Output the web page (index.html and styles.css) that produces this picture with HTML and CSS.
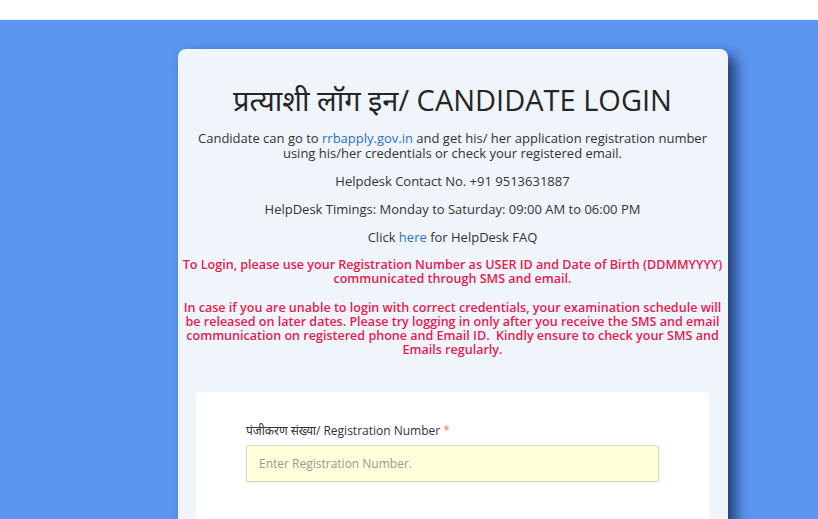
FILE: index.html
```html
<!DOCTYPE html>
<html>
<head>
<meta charset="utf-8">
<link rel="stylesheet" href="styles.css">
</head>
<body>
<div class="topbar"></div>
<main class="stage">
  <section class="card">
    <h1 class="title">प्रत्याशी लॉग इन/ CANDIDATE LOGIN</h1>
    <p class="info">Candidate can go to <a href="#">rrbapply.gov.in</a> and get his/ her application registration number using his/her credentials or check your registered email.</p>
    <p class="info">Helpdesk Contact No. +91 9513631887</p>
    <p class="info">HelpDesk Timings: Monday to Saturday: 09:00 AM to 06:00 PM</p>
    <p class="info">Click <a href="#">here</a> for HelpDesk FAQ</p>
    <p class="warn">To Login, please use your Registration Number as USER ID and Date of Birth (DDMMYYYY) communicated through SMS and email.</p>
    <p class="warn">In case if you are unable to login with correct credentials, your examination schedule will be released on later dates. Please try logging in only after you receive the SMS and email communication on registered phone and Email ID.&nbsp; Kindly ensure to check your SMS and Emails regularly.</p>
    <div class="form-box">
      <label class="field-label">पंजीकरण संख्या/ Registration Number <span class="req">*</span></label>
      <input class="field-input" type="text" placeholder="Enter Registration Number.">
    </div>
  </section>
</main>
</body>
</html>
```

FILE: styles.css
```css
html, body {
  margin: 0;
  padding: 0;
  height: 100%;
  overflow: hidden;
}
body {
  font-family: "Open Sans", "Noto Sans", "Noto Sans Devanagari", sans-serif;
  background: #5b97f1;
}
.topbar {
  height: 19px;
  background: #ffffff;
  border-bottom: 1px solid #e4eefb;
}
.stage {
  padding: 29px 0 0 178px;
  height: 470px;
  overflow: hidden;
}
.card {
  width: 550px;
  box-sizing: border-box;
  background: #f0f5fc;
  border-radius: 8px;
  padding: 28px 19px 0 18px;
  height: 520px;
  box-shadow: 8px 6px 14px rgba(25, 45, 100, 0.85);
  text-align: center;
  color: #333;
}
.title {
  margin: 0 0 8px 0;
  font-size: 29px;
  font-weight: 400;
  line-height: 46px;
  color: #252525;
}
.info {
  margin: 0 0 13px 0;
  font-size: 13px;
  line-height: 15px;
}
.info a {
  color: #2a72c9;
  text-decoration: none;
}
.warn {
  margin: 0 -18px 15px -18px;
  font-size: 12.55px;
  font-weight: 600;
  line-height: 14px;
  color: #ea1a4c;
}
.form-box {
  margin-top: 35px;
  background: #ffffff;
  border-radius: 4px;
  padding: 30px 50px 40px 50px;
  text-align: left;
  height: 200px;
}
.field-label {
  display: block;
  font-size: 12px;
  color: #333;
  margin-bottom: 6px;
}
.req {
  color: #f0845c;
}
.field-input {
  display: block;
  width: 100%;
  box-sizing: border-box;
  height: 37px;
  border: 1px solid #d8d8c8;
  background: #ffffd9;
  border-radius: 2px;
  padding: 0 12px;
  font-family: inherit;
  font-size: 12px;
  box-shadow: 0 1px 2px rgba(0,0,0,0.08);
}
.field-input::placeholder {
  color: #999;
}
```
